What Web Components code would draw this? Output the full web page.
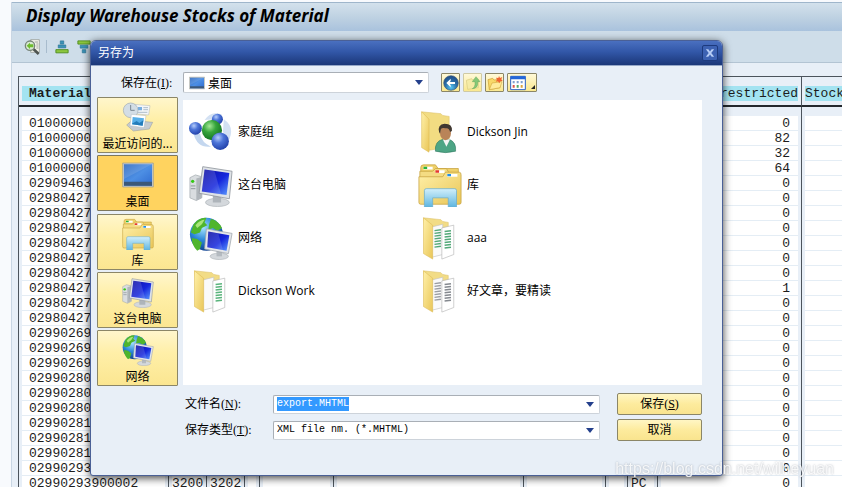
<!DOCTYPE html>
<html lang="zh-CN">
<head>
<meta charset="UTF-8">
<title>Display Warehouse Stocks of Material</title>
<style>
    html, body { margin: 0; height: 100%; overflow: hidden; }
    body {
        background: #f8fafd;
        font-family: "Liberation Sans", "Noto Sans CJK SC", sans-serif;
        color: #000;
    }
</style>
</head>
<body>
<sap-window heading="Display Warehouse Stocks of Material">
    <stock-table></stock-table>
</sap-window>
<save-dialog heading="另存为"></save-dialog>
<water-mark>https://blog.csdn.net/wilheyuan</water-mark>

<script>
const PC = `
    <path d="M1 16l6-3 7 2v23l-6 3-7-3z" fill="#d9dde0" stroke="#9ba2a8" stroke-width=".7"/>
    <path d="M8 17l6-2v23l-6 3z" fill="#b0b6bb"/>
    <circle cx="4" cy="20" r="1.8" fill="#35c916"/>
    <path d="M2 25h5M2 28h5" stroke="#8a9196"/>
    <ellipse cx="31" cy="43" rx="13" ry="4.500" fill="#d4d8dc" stroke="#aab0b6" stroke-width=".7"/>
    <path d="M26 35l9 1v7h-9z" fill="#aeb4ba"/>
    <path d="M15 4l32 5-3 30-33-6z" fill="#dfe3e7" stroke="#90979e" stroke-width=".9"/>
    <path d="M17 7l27 4-3 24-27-4z" fill="url(#scr)"/>
    <path d="M17 7l11 2 7 25-21-3z" fill="#fff" opacity=".14"/>`;
const SCREEN_DEFS = `
    <linearGradient id="scr" x1="0" y1="0" x2="1" y2="1">
        <stop offset="0" stop-color="#0c0ca0"/><stop offset=".55" stop-color="#1627dc"/><stop offset="1" stop-color="#5d9cff"/>
    </linearGradient>`;
const FOLDER_DEFS = `
    <linearGradient id="fol" x1="0" y1="0" x2="1" y2="1">
        <stop offset="0" stop-color="#fff0a8"/><stop offset="1" stop-color="#e9c658"/>
    </linearGradient>`;

function paperFolder(leftInk, rightInk) {
    return `<defs>${FOLDER_DEFS}</defs>
        <path d="M6 2l19 2 2 2 6 1v29l-22 6z" fill="#f2dc86" stroke="#dcc068" stroke-width=".6"/>
        <path d="M15 12l12-3v33l-12 3z" fill="#fafafa" stroke="#c2c2c2" stroke-width=".7"/>
        <path d="M18 16l7-1M18 19l7-1M18 22l7-1M18 25l7-1M18 28l7-1M18 31l7-1M18 34l7-1" stroke="${leftInk}" stroke-width="1.500"/>
        <path d="M26 13l13-3v32l-13 5z" fill="#fff" stroke="#b5b5b5" stroke-width=".7"/>
        <path d="M29 17l7-1M29 20l7-1M29 23l7-1M29 26l7-1M29 29l7-1M29 32l7-1M29 35l7-1" stroke="${rightInk}" stroke-width="1.700"/>
        <path d="M6 2l10 8v37L6 41z" fill="url(#fol)" stroke="#dcb951" stroke-width=".6"/>`;
}

const ICONS = {
    homegroup: `<defs>
            <radialGradient id="b" cx=".38" cy=".3" r=".7"><stop offset="0" stop-color="#b4ccfa"/><stop offset=".45" stop-color="#4c74d8"/><stop offset="1" stop-color="#2444ac"/></radialGradient>
            <radialGradient id="g" cx=".38" cy=".3" r=".7"><stop offset="0" stop-color="#a6e896"/><stop offset=".45" stop-color="#36a53c"/><stop offset="1" stop-color="#147422"/></radialGradient>
        </defs>
        <path d="M5 26Q9 42 24 40Q14 36 12 26z" fill="#c4d7ef"/>
        <path d="M17 11Q24 0 36 5L28 10zM38 10Q50 18 44 32L37 24z" fill="#d3e1f3"/>
        <circle cx="31" cy="10" r="6" fill="url(#b)"/><circle cx="7" cy="20" r="7" fill="url(#b)"/>
        <circle cx="25" cy="22" r="11" fill="url(#g)"/><circle cx="34" cy="34" r="9.500" fill="url(#b)"/>`,
    pc: `<defs>${SCREEN_DEFS}</defs>${PC}`,
    network: `<defs>${SCREEN_DEFS}<radialGradient id="sea" cx=".4" cy=".3" r=".75"><stop offset="0" stop-color="#a5e3ff"/><stop offset=".5" stop-color="#2b87d8"/><stop offset="1" stop-color="#0a3787"/></radialGradient></defs>
        <circle cx="19" cy="20" r="18" fill="url(#sea)"/>
        <path d="M5 9Q11 1 19 2l-2 5 3 3-6 3-2 5-6 2-4-2zM3 24l6 1 5 4-2 7-3 2Q3 32 3 24zM24 3q9 3 12 10l-5 3-5-3-5 2 1-6z" fill="#4fb52c"/>
        <path d="M7 10q5-6 10-6l-3 5-5 4z" fill="#a9e67a"/>
        <ellipse cx="33" cy="44" rx="10" ry="3.500" fill="#d4d8dc" stroke="#aab0b6" stroke-width=".7"/>
        <path d="M30 36h6v8h-6z" fill="#b4bac0"/>
        <path d="M19 14l28 5-4 22-26-5z" fill="#e3e6ea" stroke="#9ca3aa" stroke-width=".8"/>
        <path d="M21 17l23 4-3 17-21-4z" fill="url(#scr)"/>
        <path d="M21 17l11 2 5 18-17-3z" fill="#fff" opacity=".14"/>`,
    folder: paperFolder('#fafafa', '#5ab47c'),
    folderGreen: paperFolder('#52a878', '#52a878'),
    folderGray: paperFolder('#9a9da2', '#85898f'),
    userFolder: `<defs>${FOLDER_DEFS}</defs>
        <path d="M4 2l21 2 2 2 7 1v33l-22 4z" fill="#f2dc82" stroke="#dcc068" stroke-width=".6"/>
        <path d="M4 2l8 8v36l-8-5z" fill="url(#fol)" stroke="#dcb951" stroke-width=".6"/>
        <path d="M19 45q-1-11 8-13h7q8 3 7 13-11 3-22 0z" fill="#4da585" stroke="#2b7459" stroke-width=".6"/>
        <path d="M27 32l4 8 4-8z" fill="#f4f4f4"/>
        <ellipse cx="30" cy="25" rx="6" ry="8" fill="#b98458"/>
        <path d="M23 24q-2-8 6-9 9 0 8 8l-2 1q-1-5-5-4-4-1-5 1l-1 5z" fill="#403831"/>`,
    library: `<defs>${FOLDER_DEFS}<linearGradient id="stand" x1="0" y1="0" x2="0" y2="1"><stop offset="0" stop-color="#d2effb"/><stop offset="1" stop-color="#5fb6e0"/></linearGradient></defs>
        <path d="M3 5q0-3 3-3h13l3 4h22v32H3z" fill="#efd16a" stroke="#c5a03d" stroke-width=".8"/>
        <path d="M6 4h10v3H6z" fill="#fff"/><path d="M6 4h4v2.500H6z" fill="#25b33c"/>
        <path d="M2 9h14l3-3h12l3 5h11v27H2z" fill="#f4dc83" stroke="#c5a03d" stroke-width=".8"/>
        <path d="M19 8h10v3H19z" fill="#fff"/><path d="M19 8h4v2.500h-4z" fill="#e5382c"/>
        <path d="M1 15h26l3-5h15q2 0 2 3v30q0 2-2 2H3q-2 0-2-2z" fill="url(#fol)" stroke="#c5a03d" stroke-width=".8"/>
        <path d="M32 12h11v3H32z" fill="#fff"/><path d="M32 12h4v2.500h-4z" fill="#2390e8"/>
        <path d="M7 30q0-2 2-2h31q2 0 2 2v18h-9V38H16v10H7z" fill="url(#stand)" stroke="#69aed0" stroke-width=".8"/>`,
    recent: `<path d="M7 36l8-7 31 3-5 10-24 3z" fill="#c5cbd1" stroke="#8d959c" stroke-width=".7"/>
        <path d="M18 5l24 2-2 14-22-2z" fill="#f4f6f8" stroke="#a8aeb4" stroke-width=".7"/>
        <path d="M24 9h6v5h-6z" fill="#79aee0"/><path d="M32 10h7M32 13h7M24 17h14" stroke="#8ba0b4"/>
        <circle cx="13" cy="14" r="11" fill="#d3dde5" stroke="#a0aab2"/>
        <path d="M13 6v8h6" fill="none" stroke="#7a8792" stroke-width="1.500"/>
        <path d="M14 20l22 2-3 18-21-3z" fill="#fff" stroke="#a8b2bb" stroke-width=".7"/>
        <path d="M16 24l17 2-2 11-16-2z" fill="#56aee8"/><path d="M15 34l7-4 4 3 6-4-1 8-16-2z" fill="#247cba"/>`,
    desktop: `<defs><linearGradient id="d" x1="0" y1="0" x2="1" y2="1"><stop offset="0" stop-color="#2b67bf"/><stop offset=".5" stop-color="#4d8fe4"/><stop offset="1" stop-color="#2f6bd0"/></linearGradient></defs>
        <path d="M1 6h46v36H1z" fill="#c2c8cc" stroke="#9d9c86"/>
        <path d="M3 8h42v32H3z" fill="url(#d)"/><path d="M3 8h42L3 30z" fill="#fff" opacity=".12"/>
        <path d="M3 34h42v6H3z" fill="#3c5878"/>`,
    back: `<defs><radialGradient id="k" cx=".5" cy=".8" r=".8"><stop offset="0" stop-color="#55c5f2"/><stop offset=".5" stop-color="#2b6fa8"/><stop offset="1" stop-color="#1f4a86"/></radialGradient></defs>
        <circle cx="24" cy="24" r="22" fill="url(#k)" stroke="#3d5a7b" stroke-width="2"/>
        <path d="M23 11L10 24l13 13v-7l-3-3h16v-6H20l3-3z" fill="#fff"/>`,
    up: `<path d="M4 16l16-5 3 4 17-2v25L8 43z" fill="#f5eba6" stroke="#d8cb82" stroke-width="2"/>
        <path d="M22 41q10-5 8-21h-8L33 5l12 15h-7q2 20-16 21z" fill="#86c878" stroke="#63a85a" stroke-width="1.500"/>`,
    create: `<path d="M3 14l14-4 4 5 18-2v25L7 44z" fill="#f8d868" stroke="#c99d32" stroke-width="2"/>
        <path d="M7 44l8-20 30-4-6 18z" fill="#ffeb9a" stroke="#c99d32" stroke-width="1.500"/>
        <path d="M36 3l3 6 7-3-3 7 4 5-7 1-3 6-4-6-7 1 4-6-3-6 7 1z" fill="#ef6432"/>`,
    views: `<path d="M2 4h44v40H2z" fill="#fff" stroke="#285fc4" stroke-width="3"/><path d="M2 4h44v9H2z" fill="#2467d8"/>
        <path d="M8 18h6v7H8zM20 18h6v7h-6zM32 18h6v7h-6z" fill="#7f9fce"/><path d="M8 30h6v8H8z" fill="#db5449"/><path d="M20 30h6v8h-6z" fill="#51a763"/><path d="M32 30h6v8h-6z" fill="#dba33b"/>`,
    details: `<path d="M20 2h26v38H20z" fill="#f4f4ec" stroke="#8b8f87" stroke-width="2"/><path d="M32 9h10M37 15h6M37 21h6M37 27h6" stroke="#7c8178" stroke-width="2"/>
        <circle cx="18" cy="20" r="14" fill="#d7ead0" stroke="#78857a" stroke-width="4"/><path d="M8 20l10-9v5h10v9H18v5z" fill="#6dbb2d"/>
        <path d="M29 31l15 14" stroke="#4e5450" stroke-width="8"/>`,
    sortAsc: `<path d="M18 3h12v11H18z" fill="#3b93b8" stroke="#25708f" stroke-width="2"/><path d="M11 17h26v10H11z" fill="#3b93b8" stroke="#25708f" stroke-width="2"/><path d="M3 33h42v11H3z" fill="#8cc63e" stroke="#4b8a1e" stroke-width="3"/>`,
    sortDesc: `<path d="M3 3h42v11H3z" fill="#8cc63e" stroke="#4b8a1e" stroke-width="3"/><path d="M11 18h26v10H11z" fill="#3b93b8" stroke="#25708f" stroke-width="2"/><path d="M18 33h12v11H18z" fill="#3b93b8" stroke="#25708f" stroke-width="2"/>`,
    filter: `<path d="M3 3h42L29 24v20H19V24z" fill="#4e8fb5"/>`,
    sum: `<path d="M3 3h42v42H3z" fill="#7bab6d"/>`,
    mark: `<circle cx="24" cy="22" r="20" fill="#d97848"/>`,
    print: `<path d="M8 3h32v42H8z" fill="#8a929a"/>`,
    layout: `<path d="M3 3h42v42H3z" fill="#4d9bbb"/>`,
    close: `<path d="M4 6h12l8 11 8-11h12L30 24l14 18H32l-8-11-8 11H4l14-18z" fill="#b7cdf6"/>`
};

class UiIcon extends HTMLElement {
    constructor() {
        super();
        this.attachShadow({ mode: 'open' });
    }

    connectedCallback() {
        this.shadowRoot.innerHTML = `
            <style>
                :host { display: block; flex: none; width: 16px; height: 16px; }
                svg { display: block; width: 100%; height: 100%; }
            </style>
            <svg viewBox="0 0 48 48" aria-hidden="true">${ICONS[this.getAttribute('name')]}</svg>
        `;
    }
}
customElements.define('ui-icon', UiIcon);

class SapWindow extends HTMLElement {
    constructor() {
        super();
        this.attachShadow({ mode: 'open' });
    }

    connectedCallback() {
        const tools = ['details', '|', 'sortAsc', 'sortDesc', 'filter', '', 'sum', 'mark', '|', 'print', 'layout', 'layout', 'layout', 'mark', '', '', '', 'print', 'layout'];
        const toolsHTML = tools.map(t => {
            if (t === '|') return '<i class="sep"></i>';
            if (t === '') return '<i class="gap"></i>';
            return `<button aria-label="${t}"><ui-icon name="${t}"></ui-icon></button>`;
        }).join('');

        this.shadowRoot.innerHTML = `
            <style>
                :host {
                    display: block;
                    margin-left: 11px;
                    padding-top: 2px;
                    height: 100%;
                    box-sizing: border-box;
                    overflow: hidden;
                }
                .frame { background: #e8eff7; border-left: 1px solid #c9d6e3; min-height: 100%; }
                h1 {
                    margin: 0;
                    height: 29px;
                    box-sizing: border-box;
                    padding-left: 14px;
                    border-top: 1px solid #9fb6cb;
                    background: linear-gradient(#d3e1ec, #bfd2e2 50%, #a9c2dd);
                    font: italic 700 17px/26px "Noto Sans", "Open Sans", sans-serif;
                    white-space: nowrap;
                }
                .tools {
                    display: flex;
                    align-items: center;
                    gap: 8px;
                    height: 31px;
                    padding-left: 12px;
                    background: #cedde9;
                    border-bottom: 1px solid #b3c4d3;
                }
                button { flex: none; border: 0; padding: 0; background: none; width: 14px; }
                button ui-icon { width: 14px; height: 14px; }
                button:first-child ui-icon { width: 16px; height: 16px; }
                .sep { width: 1px; height: 13px; background: #a8bccd; }
                .gap { width: 14px; }
                .content { padding: 13px 0 0 6px; }
            </style>
            <div class="frame">
                <h1>${this.getAttribute('heading')}</h1>
                <div class="tools">${toolsHTML}</div>
                <div class="content"><slot></slot></div>
            </div>
        `;
    }
}
customElements.define('sap-window', SapWindow);

const rows = [
    ['01000000', '0'], ['01000000', '82'], ['01000000', '32'], ['01000000', '64'],
    ['02909463', '0'],
    ['02980427', '0'], ['02980427', '0'], ['02980427', '0'], ['02980427', '0'], ['02980427', '0'],
    ['02980427', '0'], ['02980427', '1'], ['02980427', '0'], ['02980427', '0'],
    ['02990269', '0'], ['02990269', '0'], ['02990269', '0'],
    ['02990280', '0'], ['02990280', '0'], ['02990280', '0'],
    ['02990281', '0'], ['02990281', '0'], ['02990281', '0'],
    ['02990293', '0'],
    ['02990293900002', '0', '3200', '3202', 'PC']
];

class StockTable extends HTMLElement {
    constructor() {
        super();
        this.attachShadow({ mode: 'open' });
    }

    connectedCallback() {
        const widths = [150, 38, 38, 15, 74, 190, 82, 22, 30, 144, 120];
        const cell = (v, cls = '') => `<td class="${cls}"><span>${v || ''}</span></td>`;
        const rowsHTML = rows.map(([material, qty, plant, store, unit]) => `<tr>
            ${cell(material, 'mat')}${cell(plant)}${cell(store)}${cell()}${cell()}${cell()}${cell()}${cell()}${cell(unit)}${cell(qty, 'num')}${cell()}
        </tr>`).join('');

        this.shadowRoot.innerHTML = `
            <style>
                :host { display: block; font: 13px/15px "Liberation Mono", monospace; color: #1c1c1c; }
                table { table-layout: fixed; width: 100%; min-width: 903px; border-collapse: separate; border-spacing: 0; border-left: 1px solid #4c545c; }
                th, td { padding: 0 3px; border-right: 1px solid #4c545c; white-space: nowrap; }
                th { height: 31px; border-top: 1px solid #4c545c; border-bottom: 2px solid #23282d; font-weight: 400; text-align: left; padding-top: 4px; box-sizing: border-box; }
                th span { display: block; background: #a3e3f1; }
                th:first-child span { padding-left: 7px; font-weight: 700; }
                th.num span { text-align: right; }
                td span { display: block; height: 14px; line-height: 16px; background: #fff; border-bottom: 1px solid #e4edf5; }
                .mat span { padding-left: 7px; }
                td.num span { padding-right: 8px; text-align: right; }
                .spacer td { height: 9px; }
            </style>
            <table>
                <colgroup>${widths.map(w => `<col style="width:${w}px">`).join('')}</colgroup>
                <thead><tr>
                    <th><span>Material</span></th>${'<th></th>'.repeat(8)}
                    <th class="num"><span>restricted</span></th><th><span>Stock</span></th>
                </tr></thead>
                <tbody><tr class="spacer">${'<td></td>'.repeat(11)}</tr>${rowsHTML}</tbody>
            </table>
        `;
    }
}
customElements.define('stock-table', StockTable);

class PlaceButton extends HTMLElement {
    constructor() {
        super();
        this.attachShadow({ mode: 'open' });
    }

    connectedCallback() {
        this.shadowRoot.innerHTML = `
            <style>
                :host { display: grid; }
                button {
                    display: flex;
                    flex-direction: column;
                    align-items: center;
                    justify-content: space-between;
                    width: 100%;
                    padding: 3px 0 0;
                    border: 1px solid #8b8667;
                    border-radius: 1px;
                    background: linear-gradient(#fff6cc, #ffefa8 40%, #fbe691);
                    font: 12px/18px "Noto Sans CJK SC", sans-serif;
                    color: #000;
                    white-space: nowrap;
                    overflow: hidden;
                }
                :host([active]) button { background: #ffd35f; border-color: #7d775c; }
                ui-icon { width: 32px; height: 32px; }
            </style>
            <button><ui-icon name="${this.getAttribute('icon')}"></ui-icon><slot></slot></button>
        `;
    }
}
customElements.define('place-button', PlaceButton);

class FileItem extends HTMLElement {
    constructor() {
        super();
        this.attachShadow({ mode: 'open' });
    }

    connectedCallback() {
        this.shadowRoot.innerHTML = `
            <style>
                :host {
                    display: flex;
                    align-items: center;
                    gap: 5px;
                    font: 12px/16px "Open Sans", "Noto Sans CJK SC", sans-serif;
                    white-space: nowrap;
                }
                ui-icon { width: 44px; height: 44px; }
            </style>
            <ui-icon name="${this.getAttribute('icon')}"></ui-icon><slot></slot>
        `;
    }
}
customElements.define('file-item', FileItem);

const places = [
    { icon: 'recent', label: '最近访问的...' },
    { icon: 'desktop', label: '桌面', active: true },
    { icon: 'library', label: '库' },
    { icon: 'pc', label: '这台电脑' },
    { icon: 'network', label: '网络' }
];

const files = [
    { icon: 'homegroup', label: '家庭组' },
    { icon: 'userFolder', label: 'Dickson Jin' },
    { icon: 'pc', label: '这台电脑' },
    { icon: 'library', label: '库' },
    { icon: 'network', label: '网络' },
    { icon: 'folderGreen', label: 'aaa' },
    { icon: 'folder', label: 'Dickson Work' },
    { icon: 'folderGray', label: '好文章，要精读' }
];

const ARROW = '<svg class="arrow" viewBox="0 0 8 5" aria-hidden="true"><path d="M0 0h8L4 5z" fill="#24408c"/></svg>';

class SaveDialog extends HTMLElement {
    constructor() {
        super();
        this.attachShadow({ mode: 'open' });
    }

    connectedCallback() {
        const placesHTML = places.map(p => `<place-button icon="${p.icon}" ${p.active ? 'active' : ''}>${p.label}</place-button>`).join('');
        const filesHTML = files.map(f => `<file-item icon="${f.icon}">${f.label}</file-item>`).join('');

        this.shadowRoot.innerHTML = `
            <style>
                /* floats over the report window */
                :host {
                    position: absolute;
                    top: 40px;
                    left: 90px;
                    right: 119px;
                    box-sizing: border-box;
                    border: 1px solid #4a6096;
                    border-radius: 6px 6px 3px 3px;
                    background: #e8eff7;
                    box-shadow: 0 2px 9px rgba(0, 0, 0, 0.75);
                    overflow: hidden;
                    font: 12px/16px "Liberation Serif", "Noto Sans CJK SC", serif;
                }
                header {
                    display: flex;
                    align-items: center;
                    justify-content: space-between;
                    height: 24px;
                    padding: 0 4px 0 7px;
                    background: linear-gradient(#4a70c0, #3257a8 45%, #1b3778);
                    border-bottom: 1px solid #96a8c8;
                    color: #fff;
                }
                h2 { margin: 0; font: inherit; }
                .close { display: grid; place-items: center; width: 16px; height: 16px; padding: 0; border: 1px solid #1d3a7d; border-radius: 2px; background: #3d62b3; }
                .close ui-icon { width: 10px; height: 10px; }
                .lookin { display: flex; align-items: center; padding: 6px 0 7px 30px; }
                .lookin label { width: 62px; }
                .field {
                    position: relative;
                    display: flex;
                    align-items: center;
                    box-sizing: border-box;
                    background: #fff;
                    border: 1px solid #a9afb6;
                    border-right-color: #cdd3da;
                    border-bottom-color: #cdd3da;
                    border-radius: 2px;
                }
                .lookin .field { width: 246px; height: 21px; padding-left: 5px; }
                .arrow { position: absolute; right: 5px; width: 8px; height: 5px; pointer-events: none; }
                select, input {
                    appearance: none;
                    flex: 1;
                    min-width: 0;
                    width: 100%;
                    padding: 0 3px;
                    border: 0;
                    outline: 0;
                    background: none;
                    color: #000;
                    font: 12px/16px "Noto Sans CJK SC", sans-serif;
                }
                .entry select, .entry input { font: 10px/14px "Liberation Mono", monospace; }
                input::selection { background: #3399ff; color: #fff; }
                .nav { display: flex; gap: 3px; margin-left: 12px; }
                .nav button {
                    display: flex;
                    align-items: center;
                    justify-content: center;
                    gap: 5px;
                    width: 19px;
                    height: 19px;
                    padding: 0;
                    border: 1px solid #8b8667;
                    border-radius: 1px;
                    background: linear-gradient(#fff9d8, #fae88f);
                }
                .nav button[disabled] { border-color: #cfcaa4; }
                .nav .wide { width: 30px; }
                .nav .wide svg { width: 4px; height: 4px; margin-top: 8px; }
                .main { display: grid; grid-template-columns: 81px minmax(0, 1fr); column-gap: 5px; padding: 0 20px 0 6px; }
                .places { display: grid; grid-auto-rows: 56px; align-content: space-between; margin: -3px 0 -1px; }
                .list {
                    display: grid;
                    grid-template-columns: repeat(2, 229px);
                    grid-auto-rows: 53px;
                    padding: 5px 6px 68px;
                    background: #fff;
                }
                .entry {
                    display: grid;
                    grid-template-columns: 83px minmax(0, 1fr) 85px;
                    column-gap: 5px;
                    row-gap: 4px;
                    align-items: center;
                    padding: 8px 20px 34px 94px;
                }
                .entry .field { height: 19px; margin-right: 12px; }
                .entry > button {
                    height: 22px;
                    padding: 0;
                    border: 1px solid #8b8667;
                    border-radius: 2px;
                    background: linear-gradient(#fff6c4, #fdeb9d 50%, #f9e48e);
                    color: #000;
                    font: inherit;
                }
            </style>
            <header>
                <h2>${this.getAttribute('heading')}</h2>
                <button class="close" aria-label="关闭"><ui-icon name="close"></ui-icon></button>
            </header>
            <div class="lookin">
                <label for="where">保存在(<u>I</u>):</label>
                <div class="field">
                    <ui-icon name="desktop"></ui-icon>
                    <select id="where"><option>桌面</option></select>${ARROW}
                </div>
                <div class="nav">
                    <button aria-label="后退"><ui-icon name="back"></ui-icon></button>
                    <button aria-label="向上" disabled><ui-icon name="up"></ui-icon></button>
                    <button aria-label="新建文件夹"><ui-icon name="create"></ui-icon></button>
                    <button class="wide" aria-label="查看"><ui-icon name="views"></ui-icon><svg viewBox="0 0 4 4"><path d="M4 0v4H0z" fill="#222"/></svg></button>
                </div>
            </div>
            <div class="main">
                <div class="places">${placesHTML}</div>
                <div class="list">${filesHTML}</div>
            </div>
            <div class="entry">
                <label for="name">文件名(<u>N</u>):</label>
                <div class="field"><input id="name" value="export.MHTML">${ARROW}</div>
                <button>保存(<u>S</u>)</button>
                <label for="type">保存类型(<u>T</u>):</label>
                <div class="field"><select id="type"><option>XML file nm. (*.MHTML)</option></select>${ARROW}</div>
                <button>取消</button>
            </div>
        `;

        const name = this.shadowRoot.getElementById('name');
        name.focus();
        name.select();
    }
}
customElements.define('save-dialog', SaveDialog);

class WaterMark extends HTMLElement {
    constructor() {
        super();
        this.attachShadow({ mode: 'open' });
        this.shadowRoot.innerHTML = `
            <style>
                :host {
                    position: fixed;
                    right: 8px;
                    bottom: 9px;
                    font: 16px/18px "Liberation Sans", sans-serif;
                    color: rgba(255, 255, 255, 0.85);
                    text-shadow: 0 0 2px rgba(90, 100, 115, 0.5);
                    pointer-events: none;
                }
            </style>
            <slot></slot>
        `;
    }
}
customElements.define('water-mark', WaterMark);
</script>
</body>
</html>
